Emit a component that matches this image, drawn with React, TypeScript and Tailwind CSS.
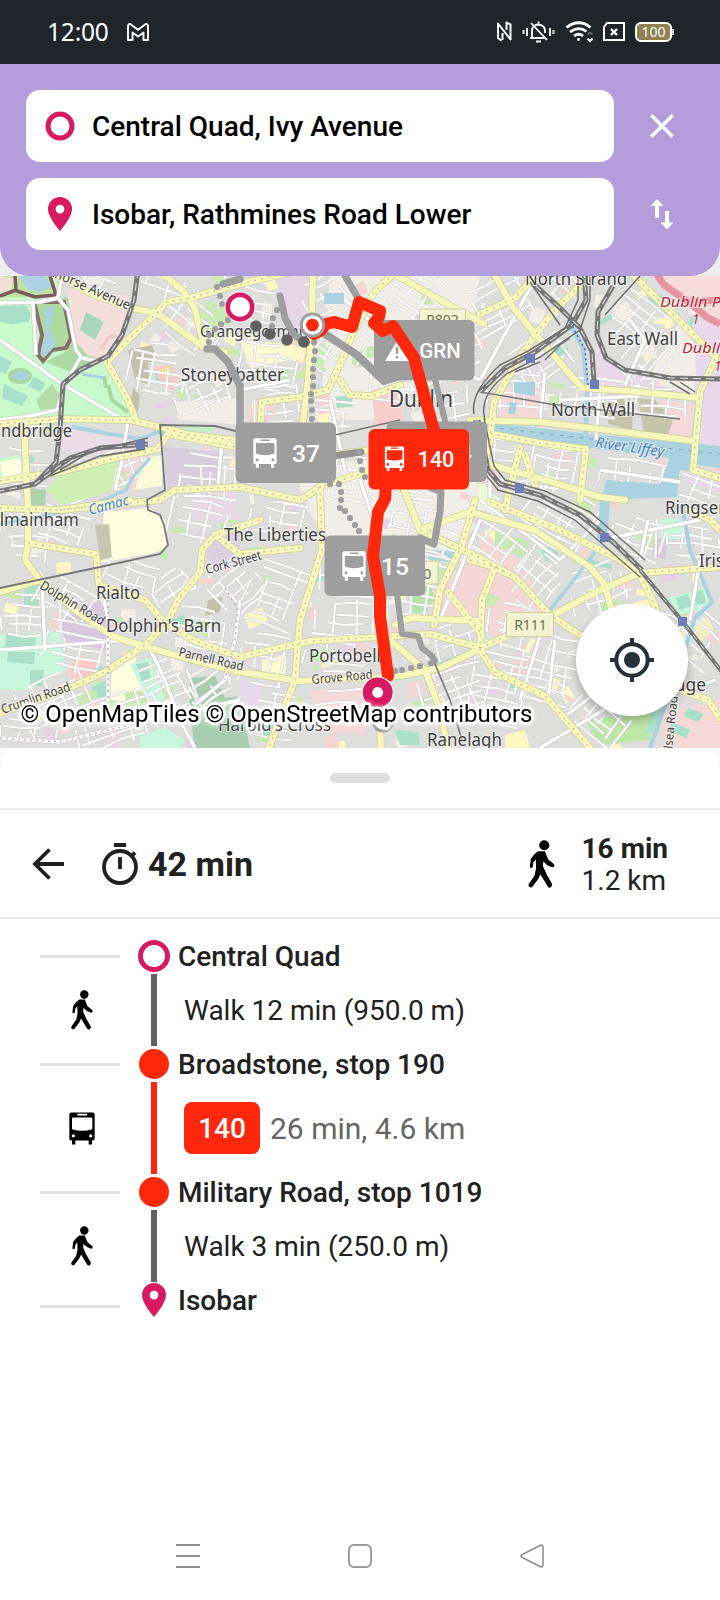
import type { ReactNode } from "react";

const RED = "#ff280d";
const PINK = "#d81b60";
const GREY = "#9e9e9e";

/* ---------- icons ---------- */

function WalkIcon({ className }: { className: string }) {
  return (
    <svg viewBox="506 299 81 146" className={className} fill="#000">
      <circle cx="555" cy="315" r="15.5" />
      <path d="M537 333H557Q561 345 567 358L584 372Q588 377 583 382Q577 382 562 374L552 364L551 379L562 403L578 431Q581 438 575 443Q568 446 565 440L543 403L537 417L519 441Q513 446 508 440Q505 436 509 431L525 408L530 386L529 358L522 367L520 381Q516 387 511 381L514 357Q524 340 537 333Z" />
    </svg>
  );
}

type BusProps = { fill: string; bg: string; x?: number; y?: number; width: number; height: number };
function BusIcon({ fill, bg, ...rest }: BusProps) {
  return (
    <svg viewBox="207 155 78 98" {...rest}>
      <path fill={fill} d="M214 156H278Q284 156 284 162V234Q284 240 278 240H214Q208 240 208 234V162Q208 156 214 156ZM216 239H226V252H216ZM266 239H276V252H266Z" />
      <path fill={bg} d="M216 175Q216 171 220 171H273Q277 171 277 175V206Q246 216 216 206ZM232 160H261V165H232Z" />
      <circle cx="220" cy="226" r="5" fill={bg} />
      <circle cx="272" cy="226" r="5" fill={bg} />
    </svg>
  );
}

function PinIcon() {
  return (
    <svg viewBox="0 0 24 34" className="h-[34px] w-6" fill={PINK}>
      <path fillRule="evenodd" d="M12 0A12 12 0 0 0 0 12C0 20.5 12 34 12 34S24 20.5 24 12A12 12 0 0 0 12 0ZM12 7.7A4.4 4.4 0 1 1 12 16.5A4.4 4.4 0 0 1 12 7.7Z" />
    </svg>
  );
}

/* ---------- status bar ---------- */

function StatusBar() {
  return (
    <div className="flex h-16 items-center bg-[#1e252b] pr-[46px] pl-[47px] text-white">
      <span className="font-['Noto_Sans',sans-serif] text-[24.5px] leading-none tracking-[-0.2px]">12:00</span>
      <svg viewBox="0 0 22 18" className="ml-[18px] h-[18px] w-[22px]" fill="none" stroke="#fff" strokeWidth="1.9" strokeLinejoin="round">
        <path d="M1 2.500V17H5.500V9.500L11 13.500L16.500 9.500V17H21V2.500Q20.300 0.600 18.500 1.200L11 6.800L3.500 1.200Q1.700 0.600 1 2.500Z" />
      </svg>
      <svg viewBox="0 0 178 22" className="ml-auto h-[22px] w-[178px]" fill="none" stroke="#fff">
        <path d="M5.500 19.800L2 17V2.500L14.500 18.500V3.500L10.500 1.500V9M6.500 12V19" strokeWidth="2" strokeLinejoin="round" />
        <g strokeWidth="1.800">
          <path d="M27.500 9V13M31 7V15M54 7V15M57.500 9V13M34 17H49M36 17V8Q38 4 42 3.500Q49 4 49 10V12M42.500 0.500V3M35 2L51 19M40 20.500H45" />
        </g>
        <g strokeWidth="2.700">
          <path d="M70.500 6.500Q83 -3 94.500 6.500M74 11Q83 4.500 90.500 10.500M78 15Q83 11.500 87 15" />
          <circle cx="82.500" cy="18.500" r="1.400" fill="#fff" stroke="none" />
        </g>
        <path d="M91.500 17.500L94 20L96.500 17.500" strokeWidth="2.200" />
        <path d="M91.500 13.500L94 11.500L96.500 13.500" strokeWidth="1.500" opacity=".4" />
        <path d="M111 2H128V19H108V6Z" strokeWidth="2" />
        <path d="M115 8L121 14M121 8L115 14" strokeWidth="2.400" />
        <rect x="140" y="2" width="35" height="18" rx="5" fill="#8f8150" strokeWidth="2" />
        <path d="M177 8V14" strokeWidth="1.600" />
        <text x="157.500" y="16" textAnchor="middle" fill="#fff" stroke="none" className="font-['Noto_Sans',sans-serif] text-[14px]">100</text>
      </svg>
    </div>
  );
}

/* ---------- search ---------- */

function SearchField({ icon, children }: { icon: ReactNode; children: ReactNode }) {
  return (
    <div className="flex h-[72px] w-[588px] items-center rounded-[14px] bg-white pl-[19px] text-[28px] font-medium text-black">
      <span className="mr-[17px] flex w-[30px] justify-center">{icon}</span>
      <span className="pt-px whitespace-nowrap">{children}</span>
    </div>
  );
}

function SearchPanel() {
  return (
    <div className="bg-[#ededed]">
      <div className="flex h-[212px] gap-[36px] rounded-b-[30px] bg-[#b39ddb] pt-[26px] pl-[26px]">
        <div className="flex flex-col gap-4">
          <SearchField
            icon={
              <svg viewBox="0 0 30 30" className="size-[30px]">
                <circle cx="15" cy="15" r="12" fill="none" stroke={PINK} strokeWidth="5" />
              </svg>
            }
          >
            Central Quad, Ivy Avenue
          </SearchField>
          <SearchField icon={<PinIcon />}>Isobar, Rathmines Road Lower</SearchField>
        </div>
        <div className="flex flex-col gap-4">
          <svg viewBox="0 0 24 72" className="h-[72px] w-6" stroke="#fff" strokeWidth="3.400">
            <path d="M1.300 25.300L22.700 46.700M22.700 25.300L1.300 46.700" />
          </svg>
          <svg viewBox="0 0 24 72" className="h-[72px] w-6" fill="#fff">
            <path d="M7 21L0.500 28H5V40H9V28H13.500ZM17 51.500L10.500 44.500H15V33H19V44.500H23.500Z" />
          </svg>
        </div>
      </div>
    </div>
  );
}

/* ---------- map ---------- */

function rng(seed: number) {
  let s = seed * 9301 + 49297;
  return () => {
    s = (s * 1103515245 + 12345) & 0x7fffffff;
    return s / 0x7fffffff;
  };
}

/* Small street grid: [cx, cy, width, height, rotation] */
const districts: number[][] = [
  [190, 330, 70, 50, 38], [160, 370, 60, 50, 8], [205, 395, 60, 40, -22], [100, 290, 70, 24, 22],
  [170, 285, 70, 36, 20], [250, 300, 60, 40, 15], [270, 370, 60, 50, 8], [330, 300, 50, 50, -28],
  [345, 350, 50, 60, 30], [420, 300, 60, 50, 35], [460, 350, 70, 60, -28], [400, 385, 60, 50, 5],
  [330, 420, 50, 60, 5], [280, 405, 50, 40, -5], [500, 310, 70, 60, -28], [545, 360, 60, 50, -35],
  [560, 295, 50, 40, 40], [640, 320, 80, 60, 38], [650, 355, 60, 40, -50], [520, 395, 70, 40, 3],
  [600, 400, 80, 40, 5], [655, 400, 60, 40, 5], [510, 460, 60, 40, 5], [555, 470, 50, 60, 10],
  [640, 480, 80, 34, 8], [700, 490, 50, 40, 20], [500, 540, 70, 60, 35], [560, 520, 70, 60, 30],
  [540, 580, 60, 50, -50], [600, 590, 60, 50, -20], [640, 540, 60, 40, 20], [690, 540, 70, 50, 5],
  [550, 670, 60, 70, 15], [500, 690, 60, 70, 12], [510, 630, 50, 50, 15], [600, 720, 60, 50, 40],
  [660, 640, 60, 50, 20], [700, 640, 50, 50, 40], [455, 700, 60, 60, -20], [455, 650, 60, 50, -15],
  [350, 615, 70, 60, 3], [350, 570, 60, 50, 3], [275, 600, 60, 70, 20], [265, 660, 50, 50, 10],
  [340, 655, 70, 40, 4], [345, 710, 60, 40, -5], [420, 590, 60, 70, 10], [405, 520, 50, 50, 12],
  [280, 520, 60, 50, 10], [240, 590, 50, 60, -40], [200, 520, 60, 50, 12], [210, 480, 60, 50, 5],
  [130, 580, 50, 40, 20], [70, 605, 70, 40, 30], [30, 540, 60, 50, 3], [60, 530, 50, 40, 20],
  [30, 620, 60, 50, 3], [80, 650, 70, 50, 12], [60, 700, 80, 50, -25], [120, 720, 90, 50, -20],
  [30, 735, 60, 30, 3], [180, 590, 50, 40, -35], [200, 630, 60, 40, 10], [215, 690, 60, 50, -35],
  [170, 690, 50, 60, -25], [280, 720, 50, 50, 10], [30, 470, 50, 40, 5], [80, 480, 60, 40, -20],
  [120, 470, 50, 40, -25], [290, 460, 60, 50, 4], [420, 470, 70, 60, 6], [440, 400, 60, 50, -10],
  [350, 480, 60, 50, 12], [440, 540, 60, 50, 18],
];

function gridPath(w: number, h: number, seed: number) {
  const r = rng(seed + 3);
  let d = "";
  for (let y = -h / 2; y <= h / 2; y += 7 + r() * 7) {
    const a = -w / 2 + r() * w * 0.35;
    const b = w / 2 - r() * w * 0.35;
    const bend = (r() - 0.5) * 5;
    d += `M${a.toFixed(1)} ${y.toFixed(1)}L${((a + b) / 2).toFixed(1)} ${(y + bend).toFixed(1)}L${b.toFixed(1)} ${y.toFixed(1)}`;
  }
  for (let x = -w / 2; x <= w / 2; x += 10 + r() * 12) {
    const a = -h / 2 + r() * h * 0.45;
    const b = h / 2 - r() * h * 0.45;
    d += `M${x.toFixed(1)} ${a.toFixed(1)}L${(x + (r() - 0.5) * 6).toFixed(1)} ${b.toFixed(1)}`;
  }
  return d;
}

const patchColours = ["#f2efe9", "#f3d6d4", "#c8e8b4", "#fdf8c4", "#aae0cb", "#e6d3e6", "#f2efe9", "#f3d6d4", "#cdebb0"];

function scatter() {
  const r = rng(77);
  const out: { x: number; y: number; w: number; h: number; a: number; c: string }[] = [];
  for (let i = 0; i < 330; i++) {
    out.push({ x: r() * 720, y: 276 + r() * 472, w: 4 + r() * 16, h: 4 + r() * 13, a: r() * 70 - 35, c: patchColours[Math.floor(r() * 9)] });
  }
  return out;
}
const patches = scatter();

const areas: [string, string][] = [
  ["#f1eee8", "300,470 480,440 490,520 440,550 330,540 300,500"],
  ["#f1eee8", "330,276 480,276 470,340 380,420 320,420"],
  ["#e5d6e5", "279,276 308,276 306,335 290,332 280,300"],
  ["#f3d8d6", "480,530 520,560 545,610 500,640 480,625"],
  ["#f3d8d6", "430,580 480,560 480,620 450,625"],
  ["#f6cfcc", "372,390 400,385 402,420 375,428"],
  ["#ead9e8", "595,330 604,360 640,372 700,382 698,395 600,388"],
  ["#f3dad8", "520,380 545,378 540,425 500,420 500,395"],
  ["#f3dad8", "660,400 694,403 690,438 655,432"],
  ["#c5c5ab", "610,395 634,397 632,430 608,424"],
  ["#c5c5ab", "638,398 655,400 673,420 668,436 644,433"],
  ["#f1eee8", "680,320 698,350 693,395 660,385 652,372"],
  ["#ead9ea", "695,325 720,310 720,450 697,442"],
  ["#f5dcd8", "655,276 720,276 720,320 690,310"],
  ["#ead9ea", "676,470 690,472 720,482 720,490 690,485"],
  ["#d8cedd", "163,446 220,452 216,486 168,490"],
  ["#ead9e5", "190,486 235,488 240,520 192,520"],
  ["#eadde8", "62,427 150,440 150,447 90,455 62,450"],
  ["#f1eee8", "176,402 238,398 238,424 178,420"],
  ["#c6eec5", "183,425 214,427 213,432 183,432"],
  ["#fdfbdc", "138,460 162,455 162,486 132,490"],
  ["#f3d8d6", "125,455 144,455 135,490 126,485"],
  ["#fdfde0", "104,512 150,508 165,520 168,545 158,552 100,563"],
  ["#c6c6b1", "95,525 109,524 112,558 100,560"],
  ["#fdfde0", "112,668 135,658 145,690 135,702 110,700"],
  ["#cdebb0", "125,692 150,690 145,706 125,706"],
  ["#ffc9c6", "70,668 78,655 98,662 95,675 72,680"],
  ["#d8c9df", "60,620 100,600 110,625 105,650 65,640"],
  ["#ddd1e0", "200,545 240,530 240,560 215,567"],
  ["#c8f7dd", "0,635 60,632 65,670 30,690 0,690"],
  ["#abe0cb", "6,634 36,635 35,649 5,647"],
  ["#abe0cb", "8,652 35,652 34,664 7,662"],
  ["#abe0cb", "30,670 44,670 42,687 30,685"],
  ["#aedfc9", "24,585 40,585 38,607 24,606"],
  ["#c8f7dd", "130,664 150,658 165,700 148,700"],
  ["#a9dfca", "136,664 148,662 151,680 142,682"],
  ["#a8cdb0", "190,678 215,676 225,698 240,696 240,748 195,748 190,715"],
  ["#a8cdb0", "240,700 250,748 225,748"],
  ["#c8f7dd", "140,735 165,728 185,740 180,748 140,748"],
  ["#f3d9d7", "310,690 368,688 365,735 318,732"],
  ["#e5d9ea", "240,680 262,685 255,715 240,700"],
  ["#fdfbd0", "262,660 286,655 285,680 262,678"],
  ["#b5e3a8", "408,590 428,578 435,600 415,615"],
  ["#aad3df", "425,550 455,552 452,562 430,560"],
  ["#c8e8b4", "425,562 452,564 444,590 438,590"],
  ["#abe0cb", "395,730 418,732 420,745 400,745"],
  ["#c9e9b4", "495,530 530,542 523,558 495,545"],
  ["#c9e9b4", "484,590 498,598 494,608 482,602"],
  ["#c8f7dd", "660,518 684,520 680,540 660,538"],
  ["#c8f7dd", "668,598 705,588 710,606 680,615"],
  ["#a9dfca", "676,598 688,594 692,606 680,610"],
  ["#a9dfca", "693,592 703,590 706,603 696,605"],
  ["#dccbe0", "653,540 668,537 665,560 652,555"],
  ["#f0f0c5", "690,627 708,618 714,630 700,642"],
  ["#f5d9d7", "660,715 720,700 720,748 668,748"],
  ["#a9dfca", "688,708 704,714 698,722 684,716"],
  ["#a9dfca", "672,722 690,730 686,738 668,731"],
  ["#f5d2d0", "508,665 528,655 532,670 515,682"],
  ["#bfe8a8", "585,720 625,715 665,700 650,740 600,745"],
  ["#abe3cc", "655,700 664,702 656,730 645,735"],
  ["#fcf8c0", "505,735 525,730 530,748 505,748"],
  ["#f3dad8", "480,465 498,470 496,490 480,482"],
  ["#ecfbdc", "478,480 500,500 496,512 478,510"],
  ["#c9e9b4", "206,315 214,302 232,306 228,325 212,322"],
  ["#fffbd0", "240,340 295,345 290,360 250,368"],
  ["#c9f0b8", "322,345 332,350 320,370 315,366"],
  ["#c2c2ab", "128,350 152,345 158,362 148,362 150,385 135,380"],
  ["#f3cfcb", "155,368 172,362 178,378 172,390 160,385"],
  ["#f7e28c", "160,370 170,366 172,375 164,378"],
  ["#c2c2ab", "133,388 140,395 138,412 130,405"],
  ["#c2c2ab", "208,600 222,597 220,612 205,616"],
  ["#e6dbe6", "535,348 552,368 530,372 520,366"],
];

/* Secondary roads drawn yellow */
const yellowRoads = [
  "M50 270L90 293L130 308L157 313L205 348L225 352",
  "M107 362L135 333L157 313L166 302L190 298L240 284L300 270",
  "M107 362L128 400L135 418",
  "M158 270L182 290L194 306L205 348",
  "M0 424L60 419L130 420L165 428L185 434L240 441",
  "M0 481L60 472L115 458L158 449L168 434L240 448L300 458",
  "M24 425L28 510L28 545L25 560L40 580",
  "M60 510L160 500L175 490L240 487L300 500L322 486L372 470",
  "M0 508L60 510L130 500",
  "M313 270L312 320L308 380L302 430",
  "M260 432L262 402L300 397L328 390L342 360L352 335L374 292L398 270",
  "M340 380L350 395L372 396L400 385",
  "M398 276L440 300L484 324",
  "M320 486L322 550L300 620L295 680L268 750",
  "M480 314L515 298L535 276",
  "M492 270L512 306L536 335L582 388L640 392L700 398",
  "M590 276L555 310L535 335L515 365L494 402L490 440L480 480",
  "M628 270L716 357L700 392L693 470L720 478",
  "M470 420L540 422L590 428L695 441",
  "M470 430L540 443L586 449L580 500",
  "M520 448L512 480L505 510",
  "M480 462L535 477L600 497L625 500",
  "M525 455L535 485",
  "M490 502L560 530L620 560L640 575L655 605L658 625",
  "M470 512L535 530L590 567L605 585L612 612",
  "M470 560L495 567L515 577L550 615L580 635L600 640",
  "M640 573L680 570L720 567",
  "M553 615L600 590L640 573",
  "M480 648L510 635L550 618",
  "M495 567L482 600L480 650L495 672L545 696L592 750",
  "M0 592L40 580L75 610L112 636L150 648L200 662L240 672L300 681L400 676L440 668L482 648",
  "M28 543L96 554L99 585L145 600L166 624L195 641L240 657L310 641L380 637L430 634L482 648",
  "M300 548L240 554L215 535M260 520L215 535L202 550L200 572L178 600L166 624L145 645L105 672L60 692L0 713",
  "M395 625L410 618L480 621M390 640L425 670L440 710L448 750",
  "M434 625L440 590L462 545L475 500",
  "M420 530L480 558L505 572M448 592L482 635",
  "M378 680L381 750",
  "M680 690L708 700L720 718",
  "M690 510L710 520L720 530",
  "M330 455L372 450M400 480L420 530L470 512",
];

const whiteRoads = [
  "M0 340L62 384L124 420",
  "M0 303L40 302L58 298L62 276",
  "M58 298L68 310L76 350L82 358L103 362",
  "M33 304L36 355",
  "M80 358L65 384L57 410L30 416L0 420",
  "M128 420L122 460L115 490",
  "M222 440L218 485",
  "M0 650L130 640M42 580L45 650",
  "M100 580L108 620L108 710",
  "M148 645L165 680L180 720L195 748",
  "M240 600L235 640L225 680L195 705",
  "M0 738L60 742L130 725L240 700",
  "M540 270L480 380M560 400L640 396M600 388L596 440",
  "M630 320L645 340L625 385",
  "M490 460L490 500M600 470L680 482",
  "M480 500L560 560L600 520M545 620L520 700",
  "M480 385L525 370M545 372L540 420",
  "M330 400L345 470M290 380L240 390M345 300L400 345L480 380",
  "M360 480L380 540L395 590",
  "M480 520L440 620M600 540L700 520",
  "M680 690L600 640M555 640L548 700",
  "M600 690L560 720M620 700L540 748",
  "M640 560L648 520M700 560L690 620",
  "M690 690L715 680",
];

const rails = [
  "M138 270L134 300L122 335L108 356L80 370L63 384L60 430L56 462L35 484L0 491",
  "M148 444L100 448L70 458L35 484",
  "M584 270L586 300L572 325L535 352L505 368L480 392",
  "M613 286L598 312L597 335L606 358L625 370L670 378L720 379",
  "M535 285L560 308L580 328L592 352L594 382",
  "M478 420L488 470L500 484L540 495L580 515L612 541L642 570",
];

type MapLabel = { t: string; x: number; y: number; w?: number; r?: number; s?: number; a?: "end"; c?: string; i?: boolean };
const labels: MapLabel[] = [
  { t: "North Strand", x: 525, y: 285, w: 102 },
  { t: "East Wall", x: 607, y: 345, w: 71 },
  { t: "North Wall", x: 551, y: 416, w: 84 },
  { t: "Ringsend", x: 665, y: 514, w: 74 },
  { t: "Grangegorman", x: 200, y: 337, w: 108, s: 16.5 },
  { t: "Stoneybatter", x: 181, y: 381, w: 103 },
  { t: "Islandbridge", x: 72, y: 437, w: 98, a: "end" },
  { t: "Kilmainham", x: 79, y: 526, w: 94, a: "end" },
  { t: "The Liberties", x: 224, y: 541, w: 102 },
  { t: "Rialto", x: 96, y: 599, w: 44 },
  { t: "Dolphin's Barn", x: 106, y: 632, w: 115 },
  { t: "Harold's Cross", x: 218, y: 731, w: 113 },
  { t: "Portobello", x: 309, y: 662, w: 82 },
  { t: "Ranelagh", x: 427, y: 746, w: 75 },
  { t: "Irishtown", x: 699, y: 567, w: 74 },
  { t: "Ballsbridge", x: 706, y: 691, w: 92, a: "end" },
  { t: "Dublin", x: 389, y: 407, w: 64, s: 23 },
  { t: "Blackhorse Avenue", x: 128, y: 310, w: 112, r: 24, s: 13.5, a: "end" },
  { t: "Cork Street", x: 207, y: 574, w: 57, r: -15, s: 13 },
  { t: "Dolphin Road", x: 39, y: 588, w: 73, r: 31, s: 13 },
  { t: "Parnell Road", x: 178, y: 656, w: 66, r: 13, s: 13 },
  { t: "Crumlin Road", x: 3, y: 714, w: 72, r: -19, s: 13 },
  { t: "Grove Road", x: 312, y: 684, w: 61, r: -5, s: 13 },
  { t: "Chelsea Road", x: 670, y: 770, w: 74, r: -84, s: 12 },
  { t: "River Liffey", x: 595, y: 447, w: 69, r: 8, s: 14.5, c: "#4d80b3", i: true },
  { t: "Camac", x: 90, y: 515, w: 41, r: -15, s: 14.5, c: "#4d80b3", i: true },
  { t: "Dublin Port", x: 660, y: 307, w: 82, s: 14, c: "#b02a3a", i: true },
  { t: "1", x: 692, y: 324, s: 13.5, c: "#b02a3a", i: true },
  { t: "Dublin Port", x: 682, y: 353, w: 82, s: 14, c: "#b02a3a", i: true },
  { t: "1", x: 714, y: 371, s: 13.5, c: "#b02a3a", i: true },
];

const greyDots = [
  [217, 287], [220, 296], [222, 304], [228, 320], [221, 324], [215, 329], [209, 335], [209, 342],
  [277, 310], [273, 318], [272, 326],
  [314, 342], [315, 351], [314, 360], [313, 369], [313, 377], [313, 386], [311, 394], [311, 401], [312, 410], [312, 419],
  [359, 452], [360, 461], [362, 470], [365, 477], [330, 484], [339, 484], [341, 492], [341, 500], [340, 508], [345, 511], [350, 518], [355, 525], [359, 531],
  [431, 663], [420, 666], [411, 668], [402, 670], [395, 671],
];

type BadgeProps = { x: number; y: number; colour: string; label: string; size: number; dx: number; dy: number };
function RouteBadge({ x, y, colour, label, size, dx, dy }: BadgeProps) {
  return (
    <g>
      <rect x={x} y={y} width="100.500" height="60.500" rx="6" fill={colour} />
      <text x={x + dx} y={y + dy} fontSize={size} textAnchor="middle" fill="#fff" className="font-['Roboto',sans-serif] font-medium">
        {label}
      </text>
    </g>
  );
}

function CityMap() {
  return (
    <svg viewBox="0 276 720 472" className="block h-[472px] w-[720px] bg-[#dededd]">
      {areas.slice(0, 2).map(([c, p], i) => (
        <polygon key={i} points={p} fill={c} />
      ))}
      {patches.map((p, i) => (
        <rect key={i} x={p.x} y={p.y} width={p.w} height={p.h} fill={p.c} transform={`rotate(${p.a.toFixed(1)} ${p.x.toFixed(1)} ${p.y.toFixed(1)})`} />
      ))}
      {areas.slice(2).map(([c, p], i) => (
        <polygon key={i} points={p} fill={c} />
      ))}
      {districts.map(([cx, cy, w, h, a], i) => (
        <g key={i} transform={`translate(${cx} ${cy}) rotate(${a})`} fill="none">
          <path d={gridPath(w, h, i)} stroke="#cfcecd" strokeWidth="3" />
          <path d={gridPath(w, h, i)} stroke="#fff" strokeWidth="1.900" />
        </g>
      ))}

      {/* park and zoo */}
      <path d="M0 276H55L64 300L72 345L80 362L104 362L134 418L0 421Z" fill="#c8facc" />
      <path d="M0 276H52L56 296L0 298Z" fill="#bfe3a4" />
      <path d="M18 276L28 290L42 292L52 287L46 276Z" fill="#aad3df" />
      <path d="M0 276L14 278L10 290L0 292Z" fill="#efe0cf" />
      <path d="M15 276L16 290L0 296M14 290L35 297L56 295L50 276" fill="none" stroke="#7c5b5d" strokeWidth="3.500" />
      <path d="M60 300L80 290L90 320L100 345L92 362L72 372L45 362L68 350Z" fill="#acd9a4" />
      <path d="M34 302H64L71 338L66 348L52 350L43 361L38 355L42 335Z" fill="#addba0" stroke="#7c5b5d" strokeOpacity=".85" strokeWidth="4" />
      <path d="M44 308L54 307L50 330L56 345L44 358L41 350L46 330Z" fill="#aad3df" />
      <path d="M66 288L128 296L126 322L118 342L104 358L88 356L76 342Z" fill="#f4dfda" />
      <path d="M86 312L104 322L95 340L80 330Z" fill="#a9d6bd" />
      <path d="M100 350L108 338L116 335" fill="none" stroke="#f4c6c6" strokeWidth="3" />
      <path d="M0 306L24 305Q34 312 28 322L12 324L0 322ZM0 356L12 362L6 374L0 372ZM4 384L28 396L22 406L2 398ZM34 376L46 384L40 392L28 386Z" fill="#aae0cb" />
      <ellipse cx="20" cy="376" rx="12" ry="8" fill="#a9d6a3" />
      <ellipse cx="21" cy="376" rx="8" ry="4.500" fill="#aad3df" />
      <path d="M52 384L60 395L58 408L40 410L36 400Z" fill="#b3dca9" />
      <path d="M108 385L112 400L128 412M104 376L106 388" fill="none" stroke="#a9d6a3" strokeWidth="4" />
      <path d="M82 374L104 378" stroke="#aad3df" strokeWidth="3" />
      <path d="M46 490L62 472L118 460L112 490L90 498L60 505Z" fill="#ceeeb2" />
      <path d="M30 488L46 490L45 505L30 505Z" fill="#aed1b0" />
      <path d="M0 458L18 455L24 480L0 485Z" fill="#c8facc" />
      <path d="M0 462L20 458L22 476L2 478Z" fill="#fefee2" />

      {/* water */}
      <g fill="none" stroke="#aad3df">
        <path d="M72 427L110 434L140 439L158 432L240 446" strokeWidth="4" />
        <path d="M150 458L132 478L126 490L85 508L0 524" strokeWidth="3.500" />
        <path d="M569 322L583 348L587 385L586 435" strokeWidth="4.500" />
        <path d="M605 500L602 540" strokeWidth="10" />
        <path d="M600 545L570 585L548 612L480 648L430 668" strokeWidth="3.500" />
        <path d="M682 505L690 550L712 602L695 618L688 640L650 748" strokeWidth="4" />
      </g>
      <path d="M470 420L590 434L720 446V468L692 464L688 471L680 470L677 497L602 500L606 480L660 484L670 458L590 448L470 434Z" fill="#aad3df" />
      <path d="M514 382H535V396L514 393ZM510 402L517 403L515 415L508 413Z" fill="#aad3df" />
      <path d="M262 290H282V301H262Z" fill="#aad3df" transform="translate(62 3)" />
      <path d="M570 322L585 350L588 385" fill="none" stroke="#3f63d8" strokeWidth="1.500" strokeDasharray="2 3" />
      <path d="M490 427L700 452L720 454" fill="none" stroke="#7aa6c4" strokeDasharray="4 6" />

      {/* roads */}
      {whiteRoads.map((d) => (
        <g key={d} fill="none" strokeLinejoin="round">
          <path d={d} stroke="#c4c4c4" strokeWidth="4.600" />
          <path d={d} stroke="#fff" strokeWidth="3.400" />
        </g>
      ))}
      {yellowRoads.map((d) => (
        <path key={d} d={d} fill="none" stroke="#cdce9e" strokeWidth="7.600" strokeLinejoin="round" strokeLinecap="round" />
      ))}
      {yellowRoads.map((d) => (
        <path key={d} d={d} fill="none" stroke="#f5f7bb" strokeWidth="6.200" strokeLinejoin="round" strokeLinecap="round" />
      ))}
      {yellowRoads.map((d, i) => (
        <path key={d} d={i % 3 === 0 ? "" : d} fill="none" stroke="#cbbda2" strokeWidth="1.300" strokeDasharray="2 5" />
      ))}
      <path d="M655 272L664 285L690 303L708 318L720 324M688 302L720 300" fill="none" stroke="#e892a2" strokeWidth="7" />
      <path d="M0 738L60 742L130 725L180 715M225 588L238 610L235 640L225 680M108 600L108 710" fill="none" stroke="#c6a9c4" strokeWidth="1.500" strokeDasharray="2 4" />

      {/* rail */}
      <g fill="none" stroke="#787878">
        <path d="M0 588L100 567L160 554L168 545L164 525L160 515L148 510L147 500L165 490L160 425L215 426L240 432" strokeWidth="1.800" />
        <path d="M480 392L510 397L550 404L680 419M335 435L400 420" strokeWidth="1.600" />
        <path d="M435 664L450 700L462 740" strokeWidth="1.600" />
      </g>
      {rails.map((d) => (
        <g key={d} fill="none" strokeLinejoin="round">
          <path d={d} stroke="#777" strokeWidth="5" />
          <path d={d} stroke="#d8d8d8" strokeWidth="1.100" strokeDasharray="8 5" />
        </g>
      ))}
      <g fill="none" stroke="#707070" strokeWidth="1.500">
        <path d="M485 420Q478 395 508 373L540 357L580 330L590 300L590 270M474 414Q470 392 500 365L530 350L565 328L578 300V270M484 418L494 466L505 480L545 491L590 512L645 560M474 420L482 470L498 490L538 501L575 520L640 577" />
        <path d="M60 470L90 452L148 438M50 476L100 456L145 449M110 446L60 462" strokeWidth="1.800" />
        <path d="M545 360L560 345L570 338M515 372L540 362" />
        <path d="M670 382L690 394M680 382L695 392M530 282L560 325M640 276L605 315" />
      </g>
      <path d="M640 570L683 622L722 672" fill="none" stroke="#777" strokeWidth="4" />
      <path d="M640 570L683 622L722 672" fill="none" stroke="#ddd" strokeDasharray="6 6" />
      <g fill="#6f7db8">
        <rect x="526" y="354" width="9" height="9" />
        <rect x="590" y="380" width="9" height="9" />
        <rect x="515" y="484" width="9" height="9" />
        <rect x="600" y="533" width="9" height="9" />
        <rect x="678" y="617" width="9" height="9" />
        <rect x="136" y="440" width="9" height="9" />
      </g>

      {/* road shields */}
      <g stroke="#cfcfa0" fill="#f2f3d3">
        <rect x="506.500" y="612.500" width="47" height="24" rx="2" />
        <rect x="419.500" y="309" width="46" height="23" rx="2" />
        <rect x="392" y="561" width="46" height="23" rx="2" />
      </g>
      <g fill="#70704e" className="font-['Noto_Sans',sans-serif] text-[14px]" textAnchor="middle">
        <text x="530.500" y="630">R111</text>
        <text x="442.500" y="325">R802</text>
        <text x="415" y="579">R110</text>
      </g>

      {/* place names */}
      <g className="font-['Noto_Sans',sans-serif]" stroke="#fff" strokeOpacity=".6" strokeWidth="2" style={{ paintOrder: "stroke" }}>
        {labels.map((l, i) => (
          <text
            key={i}
            x={l.x}
            y={l.y}
            fontSize={l.s ?? 17.500}
            fill={l.c ?? "#404040"}
            fontStyle={l.i ? "italic" : undefined}
            textAnchor={l.a}
            textLength={l.w}
            lengthAdjust="spacingAndGlyphs"
            transform={l.r ? `rotate(${l.r} ${l.x} ${l.y})` : undefined}
          >
            {l.t}
          </text>
        ))}
      </g>

      {/* alternative routes */}
      <g fill="none" stroke={GREY} strokeWidth="7" strokeLinecap="round" strokeLinejoin="round">
        <path d="M240 279L223 284M207 349H215L228 362L240 386L240 460" strokeWidth="7.500" />
        <path d="M280 296L285 318L294 335L304 341" />
        <path d="M345 276L358 298" />
        <path d="M322 332L357 355L384 381L400 376" strokeWidth="8" />
        <path d="M434 375L446 425" strokeWidth="6" />
        <path d="M333 456L361 452" stroke="#939393" />
        <path d="M425 485L441 492L440 512L434 544L420 538" />
        <path d="M397 594L402 634L418 636L422 648L432 656L435 661" strokeWidth="6" />
      </g>
      <g fill={GREY}>
        {greyDots.map(([x, y]) => (
          <circle key={`${x}-${y}`} cx={x} cy={y} r="3.100" />
        ))}
      </g>
      <circle cx="383" cy="721" r="10" fill="#fff" stroke={GREY} strokeWidth="3" />

      <RouteBadge x={386.500} y={421.500} colour={GREY} label="4" size={24} dx={78.500} dy={39} />
      <RouteBadge x={374} y={320} colour={GREY} label="GRN" size={20.500} dx={66} dy={37.500} />
      <path d="M397 341L412 361H385Z" fill="#fff" />
      <path d="M397 347V354M397 356V358.500" stroke={GREY} strokeWidth="2.500" />
      <RouteBadge x={235.500} y={422.500} colour={GREY} label="37" size={24.500} dx={70.500} dy={39} />
      <BusIcon x={253} y={438} width={24} height={30} fill="#fff" bg={GREY} />
      <RouteBadge x={324.500} y={535.500} colour={GREY} label="15" size={24.500} dx={70.500} dy={39} />
      <BusIcon x={342} y={551} width={24} height={30} fill="#fff" bg={GREY} />

      {/* walking leg and selected route */}
      <g fill="#616161">
        <circle cx="256" cy="326" r="5.800" />
        <circle cx="270" cy="334" r="5.800" />
        <circle cx="287" cy="340" r="5.800" />
        <circle cx="304" cy="342" r="5.800" />
      </g>
      <g fill="none" stroke={RED} strokeWidth="12" strokeLinejoin="round" strokeLinecap="round">
        <path d="M314 334L321 330L326 324L334 322L352 327L359 302L380 311L379 317L374 323L383 331L393 326L414 358L436 438" />
        <path d="M386 485L385 499L378 512L373 556L380 596L380 616L388 676" />
      </g>
      <RouteBadge x={368.500} y={429} colour={RED} label="140" size={21.500} dx={67.500} dy={37.500} />
      <BusIcon x={384.500} y={446} width={20} height={25.500} fill="#fff" bg={RED} />

      <circle cx="240" cy="307" r="15.500" fill="#fff" />
      <circle cx="240" cy="307" r="12.300" fill="#fff" stroke={PINK} strokeWidth="4.500" />
      <circle cx="312.500" cy="325" r="11.200" fill="#fff" stroke={GREY} strokeWidth="2.800" />
      <circle cx="312.500" cy="325" r="6.300" fill={RED} />
      <circle cx="377.700" cy="692.500" r="16.200" fill="#fff" />
      <circle cx="377.700" cy="692.500" r="15" fill={PINK} />
      <circle cx="377.700" cy="692.500" r="5.400" fill="#fff" />
    </svg>
  );
}

function MapArea() {
  return (
    <div className="relative h-[472px] overflow-hidden">
      <CityMap />
      <svg viewBox="0 0 560 44" className="absolute bottom-3 left-0 h-11 w-[560px]">
        <text
          x="20.500"
          y="30"
          textLength="512"
          lengthAdjust="spacingAndGlyphs"
          className="fill-black stroke-white font-['Roboto',sans-serif] text-[24px] [filter:drop-shadow(0_0_2px_white)]"
          strokeWidth="5"
          strokeLinejoin="round"
          style={{ paintOrder: "stroke" }}
        >
          © OpenMapTiles © OpenStreetMap contributors
        </text>
      </svg>
      <button className="absolute right-8 bottom-8 flex size-28 items-center justify-center rounded-full bg-white shadow-[0_5px_9px_rgba(0,0,0,0.24)]">
        <svg viewBox="0 0 44 44" className="size-11" fill="none" stroke="#263238" strokeWidth="4">
          <circle cx="22" cy="22" r="15.700" />
          <path d="M22 0V8M22 36V44M0 22H8M36 22H44" />
          <circle cx="22" cy="22" r="8" fill="#263238" stroke="none" />
        </svg>
      </button>
    </div>
  );
}

/* ---------- itinerary ---------- */

function Summary() {
  return (
    <div className="flex h-[111px] items-center border-y-2 border-[#ebebeb] pl-8">
      <svg viewBox="0 0 32 32" className="size-8" fill="none" stroke="#212121" strokeWidth="3.800">
        <path d="M32 16H3M17.500 1.500L3 16L17.500 30.500" />
      </svg>
      <svg viewBox="0 0 36 42" className="ml-[38px] h-[42px] w-9" fill="none" stroke="#212121" strokeWidth="3.800">
        <circle cx="18" cy="24" r="16" />
        <path d="M12 2H24M18 14V26M29 14L33 9.500" />
      </svg>
      <span className="ml-[10px] text-[34px] leading-none font-bold">42 min</span>
      <WalkIcon className="ml-auto h-12 w-[27px]" />
      <div className="mr-[52px] ml-[27px] pt-0.5 text-[28px] leading-8">
        <div className="font-bold">16 min</div>
        <div>1.2 km</div>
      </div>
    </div>
  );
}

function Stop({ name, marker, last }: { name: string; marker: ReactNode; last?: boolean }) {
  return (
    <div className="flex h-8 items-center">
      <div className={last ? "ml-10 h-[3px] w-20 translate-y-1.5 bg-[#e2e2e2]" : "ml-10 h-[3px] w-20 bg-[#e2e2e2]"} />
      <div className="ml-[18px] flex w-8 justify-center">{marker}</div>
      <div className="ml-2 pt-0.5 text-[28px] leading-8 font-medium whitespace-nowrap">{name}</div>
    </div>
  );
}

function Leg({ icon, tall, bar, children }: { icon: ReactNode; tall?: boolean; bar: string; children: ReactNode }) {
  return (
    <div className={tall ? "flex h-24 items-center" : "flex h-[76px] items-center"}>
      <div className="flex w-[138px] justify-center pl-[26px]">{icon}</div>
      <div className={`${bar} ml-[13px] h-full w-[6px] border-y-2 border-white`} />
      <div className="ml-[27px] flex items-center pt-0.5 text-[28px] leading-8 whitespace-nowrap">{children}</div>
    </div>
  );
}

const stopDot = <div className="size-[30px] rounded-full bg-[#ff280d]" />;

function Itinerary() {
  return (
    <div className="pt-[21px]">
      <Stop name="Central Quad" marker={<div className="size-8 rounded-full border-[5px] border-[#d81b60]" />} />
      <Leg icon={<WalkIcon className="h-10 w-[22px]" />} bar="bg-[#616161]">
        Walk 12 min (950.0 m)
      </Leg>
      <Stop name="Broadstone, stop 190" marker={stopDot} />
      <Leg tall icon={<BusIcon fill="#000" bg="#fff" width={26} height={33} />} bar="bg-[#ff280d]">
        <span className="-mt-0.5 flex h-[52px] w-[76px] items-center justify-center rounded-lg bg-[#ff280d] pt-px font-medium text-white">140</span>
        <span className="ml-2.5 text-[30px] text-[#666]">26 min, 4.6 km</span>
      </Leg>
      <Stop name="Military Road, stop 1019" marker={stopDot} />
      <Leg icon={<WalkIcon className="h-10 w-[22px]" />} bar="bg-[#616161]">
        Walk 3 min (250.0 m)
      </Leg>
      <Stop name="Isobar" last marker={<PinIcon />} />
    </div>
  );
}

function NavBar() {
  return (
    <div className="mt-auto flex h-[88px] items-center justify-between px-44">
      <svg viewBox="0 0 24 24" className="size-6" stroke="#8f8f8f" strokeWidth="1.800">
        <path d="M0 1H24M0 12H24M0 23H24" />
      </svg>
      <svg viewBox="0 0 24 24" className="size-6" fill="none" stroke="#8f8f8f" strokeWidth="1.700">
        <rect x="0.900" y="0.900" width="22.200" height="22.200" rx="5" />
      </svg>
      <svg viewBox="0 0 24 24" className="size-6" fill="none" stroke="#8f8f8f" strokeWidth="1.600" strokeLinejoin="round">
        <path d="M1.800 10.700L20.500 1.200Q23 0.500 23 3V21Q23 23.500 20.500 22.700L1.800 13.300Q0 12 1.800 10.700Z" />
      </svg>
    </div>
  );
}

export default function App() {
  return (
    <div className="flex h-[1600px] w-[720px] flex-col overflow-hidden bg-white font-['Roboto',sans-serif] text-[#212121]">
      <StatusBar />
      <SearchPanel />
      <MapArea />
      <div className="flex flex-1 flex-col bg-[#fcfcfc]">
        <div className="flex flex-1 flex-col rounded-t-[24px] bg-white">
          <div className="flex h-[60px] justify-center pt-[25px]">
            <div className="h-2.5 w-[60px] rounded-full bg-[#dedede]" />
          </div>
          <Summary />
          <Itinerary />
          <NavBar />
        </div>
      </div>
    </div>
  );
}
